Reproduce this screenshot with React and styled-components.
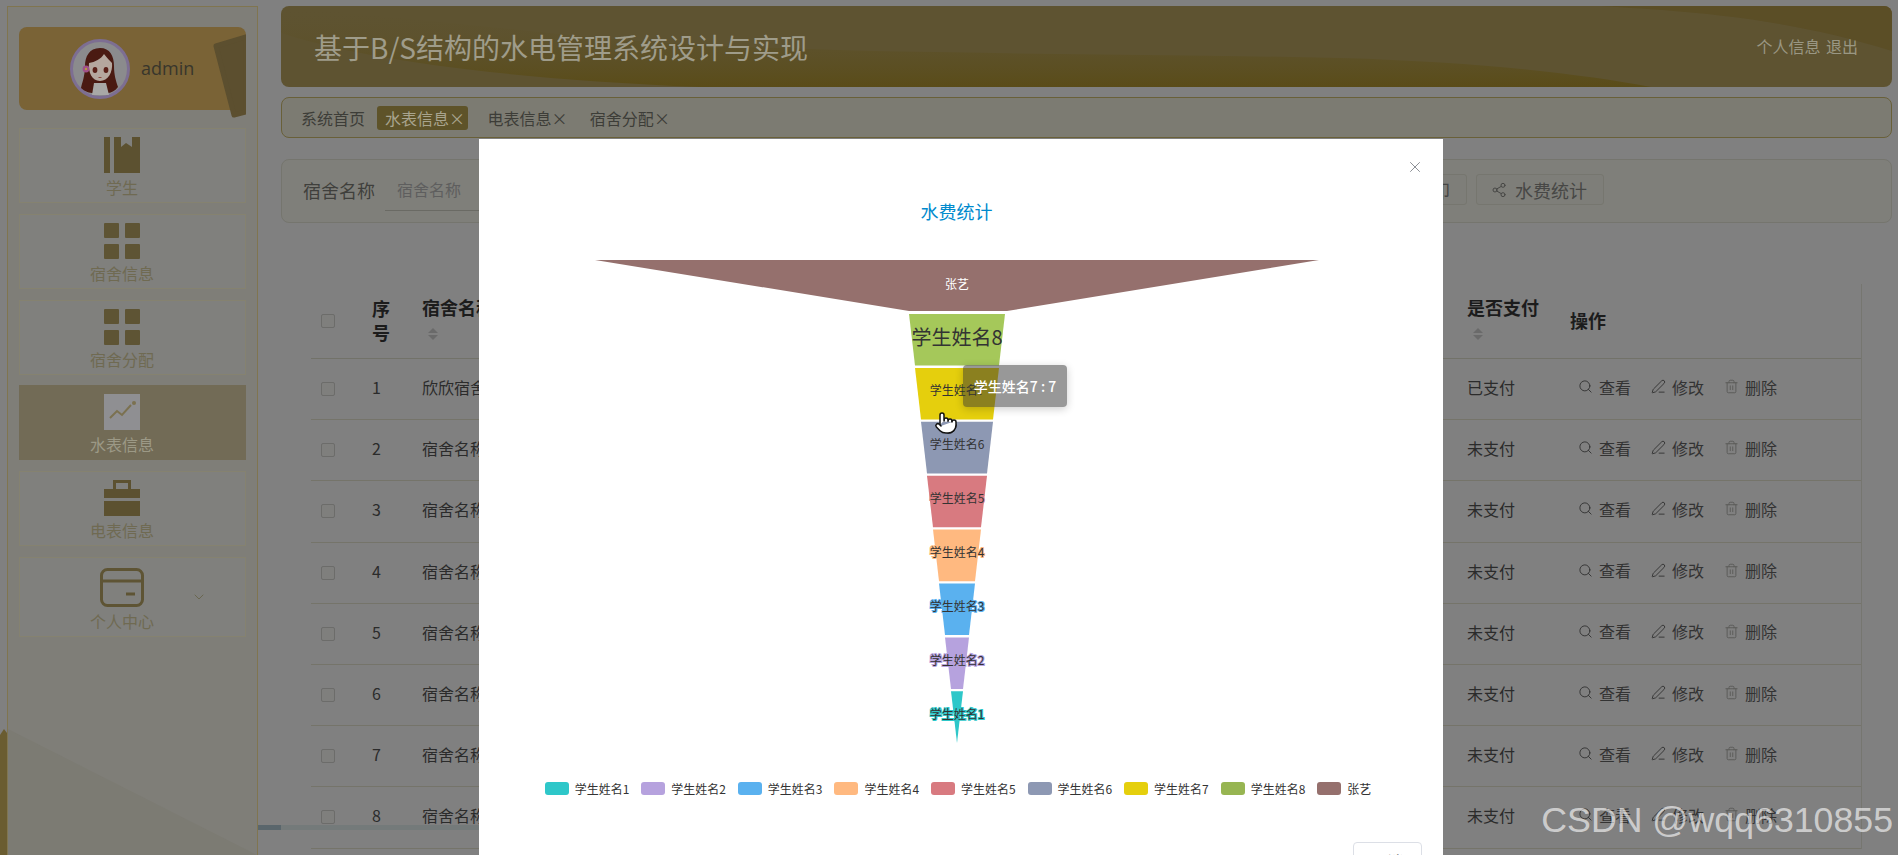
import React from 'react'
import styled, { createGlobalStyle } from 'styled-components'
import { Search, PenLine, Trash2, Share2, X, ChevronDown, Pointer } from 'lucide-react'

const GlobalStyle = createGlobalStyle`
  html, body {
    margin: 0;
    height: 855px;
    overflow: hidden;
    background: #808080;
    font-family: "Noto Sans CJK SC", "Liberation Sans", sans-serif;
  }
  * { box-sizing: border-box; }
`

const Page = styled.div`
  position: relative;
  display: flex;
  width: 1898px;
  height: 855px;
  overflow: hidden;
  padding-left: 7px;
`

const EdgeArt = styled.div`
  position: absolute;
  left: 0;
  top: 729px;
  width: 7px;
  height: 126px;
  background: #6a5c30;
  clip-path: polygon(0 6px, 4px 0, 7px 4px, 7px 100%, 0 100%);
`

const Sidebar = styled.aside`
  position: relative;
  flex: 0 0 251px;
  margin-top: 6px;
  padding: 20px 11px 0;
  background: #7f7e78;
  border: 1px solid #807550;
  border-bottom: 0;

  &::after {
    content: '';
    position: absolute;
    left: 0;
    right: 0;
    bottom: 0;
    height: 126px;
    background: #7c7b73;
    clip-path: polygon(0 0, 100% 100%, 0 100%);
  }
`

const ProfileCard = styled.div`
  position: relative;
  display: flex;
  align-items: center;
  gap: 11px;
  height: 83px;
  padding-left: 51px;
  margin-bottom: 18px;
  background: #7a6336;
  border-radius: 8px;
`

const ProfileFlap = styled.svg`
  position: absolute;
  right: 0;
  top: 5px;
  width: 36px;
  height: 86px;
`

const ProfileName = styled.span`
  font-family: "Open Sans", "Liberation Sans", sans-serif;
  font-size: 18px;
  color: #38362c;
  margin-bottom: 2px;
`

const Nav = styled.nav`
  position: relative;
  z-index: 1;
  display: flex;
  flex-direction: column;
  gap: 10.8px;
`

const NavItem = styled.div`
  position: relative;
  display: flex;
  flex-direction: column;
  align-items: center;
  height: ${p => (p.$tall ? 80 : 75)}px;
  padding: ${p => (p.$tall ? 10 : 8)}px 21px 0 0;
  background: ${p => (p.$active ? '#726b56' : '#80807d')};
  border: 1px solid ${p => (p.$active ? '#726b56' : '#858270')};
  font-size: 16px;
  line-height: 22px;
  color: ${p => (p.$active ? '#9c9986' : '#6f6a52')};
`

const NavIcon = styled.svg`
  display: block;
  width: ${p => p.$w || 36}px;
  height: ${p => p.$h || 36}px;
  margin-bottom: 3px;
`

const NavArrow = styled.span`
  position: absolute;
  left: 171px;
  top: 31px;
  display: flex;
  color: #6a6750;
`

const Main = styled.main`
  flex: 1;
  min-width: 0;
  padding: 6px 6px 0 23px;
`

const Header = styled.header`
  position: relative;
  display: flex;
  align-items: center;
  justify-content: space-between;
  height: 81px;
  padding: 0 34px 0 33px;
  margin-bottom: 10px;
  background: #5e5331;
  border-radius: 8px;
  overflow: hidden;
`

const HeaderWave = styled.svg`
  position: absolute;
  inset: 0;
  width: 100%;
  height: 100%;
`

const HeaderTitle = styled.h1`
  position: relative;
  margin: 0;
  font-size: 28px;
  font-weight: 400;
  color: #9f9c8a;
`

const HeaderLinks = styled.div`
  position: relative;
  margin-bottom: 2px;
  font-size: 16px;
  color: #9a9783;
  word-spacing: 2px;
`

const TabBar = styled.div`
  display: flex;
  align-items: center;
  gap: 11.4px;
  height: 41px;
  padding-left: 11px;
  margin-bottom: 21px;
  background: #7c7b72;
  border: 1.5px solid #696039;
  border-radius: 8px;

  & > :first-child {
    margin-right: -2.4px;
  }
`

const Tab = styled.span`
  display: flex;
  align-items: center;
  height: 24px;
  padding: 0 3px 0 8px;
  font-size: 16px;
  border-radius: 3px;
  background: ${p => (p.$active ? '#5e5329' : 'transparent')};
  color: ${p => (p.$active ? '#a8a48e' : '#3d3d38')};
`

const SearchBar = styled.div`
  display: flex;
  align-items: center;
  height: 64px;
  padding: 0 287px 3px 21px;
  margin-bottom: 61px;
  background: #7f7f7a;
  border: 1px solid #75756e;
  border-radius: 8px;
`

const FieldLabel = styled.span`
  font-size: 18px;
  color: #3f3f3c;
  margin-right: 10px;
`

const FieldInput = styled.div`
  width: 180px;
  height: 42px;
  padding: 8px 12px;
  font-size: 16px;
  line-height: 24px;
  color: #5e5e5e;
  border-bottom: 1px solid #6a6a64;
`

const ButtonRow = styled.div`
  display: flex;
  gap: 9px;
  margin-left: auto;
`

const ToolButton = styled.div`
  display: flex;
  align-items: center;
  gap: 8px;
  height: 31px;
  padding: 0 16px 0 14px;
  font-size: 18px;
  color: #474745;
  background: #7e7e79;
  border: 1px solid #76766f;
  border-radius: 3px;
`

const Table = styled.div`
  width: 1551px;
  margin-left: 30px;
  border-right: 1px solid #767670;
`

const Row = styled.div`
  display: grid;
  grid-template-columns: 61px 50px 1045px 103px 1fr;
  align-items: center;
  height: ${p => (p.$head ? 75 : 61.2)}px;
  border-bottom: 1px solid ${p => (p.$head ? '#727269' : '#75746a')};
  font-size: 16px;
  color: #2b2b2b;
`

const HeadCell = styled.div`
  padding-bottom: ${p => (p.$sortable ? 8 : 3)}px;
  font-size: 18px;
  font-weight: 700;
  line-height: 24px;
  color: #1c1c1c;
  white-space: nowrap;
`

const Cell = styled.div`
  padding-bottom: 4px;
  white-space: nowrap;
`

const CheckCell = styled.div`
  padding-left: 10px;
`

const CheckBox = styled.div`
  width: 14px;
  height: 14px;
  background: #7f7f7d;
  border: 1px solid #6c6c6a;
  border-radius: 2px;
`

const SortIcon = styled.div`
  display: flex;
  flex-direction: column;
  gap: 2px;
  width: 10px;
  margin: 9px 0 0 6px;

  &::before, &::after {
    content: '';
    border-left: 5px solid transparent;
    border-right: 5px solid transparent;
  }
  &::before { border-bottom: 5px solid #6a6a6a; }
  &::after { border-top: 5px solid #6a6a6a; }
`

const Actions = styled.div`
  display: flex;
  gap: 20px;
  padding: 0 0 5px 8px;
  color: #333;
`

const Action = styled.span`
  display: flex;
  align-items: center;
  gap: 6px;
`

const Watermark = styled.div`
  position: absolute;
  right: 5px;
  top: 796px;
  font-family: "Liberation Sans", sans-serif;
  font-size: 35.7px;
  line-height: 48px;
  color: rgba(255, 255, 255, 0.62);
  white-space: nowrap;
`

const VideoCaption = styled.div`
  position: absolute;
  left: 15px;
  top: 782px;
  font-size: 44px;
  line-height: 60px;
  color: rgba(0, 0, 0, 0.025);
  white-space: nowrap;
`

const ScrollTrack = styled.div`
  position: absolute;
  left: 258px;
  top: 825px;
  width: 222px;
  height: 5px;
  background: #747a7a;

  &::before {
    content: '';
    display: block;
    width: 23px;
    height: 100%;
    background: #5a666c;
  }
`

const Modal = styled.section`
  position: absolute;
  left: 479px;
  top: 139px;
  width: 964px;
  height: 760px;
  padding-top: 60px;
  background: #fff;
`

const ModalClose = styled.span`
  position: absolute;
  right: 19px;
  top: 19px;
  display: flex;
  color: #80838a;
`

const ChartTitle = styled.div`
  height: 24px;
  padding-right: 9px;
  font-size: 18px;
  line-height: 24px;
  text-align: center;
  color: #008acd;
`

const FunnelChart = styled.svg`
  display: block;
  width: 963px;
  height: 485px;
  margin: 37px 0 0 1px;
`

const Legend = styled.div`
  display: flex;
  justify-content: center;
  gap: 11.9px;
  height: 14px;
  padding-right: 6px;
  margin-top: 36px;
`

const LegendItem = styled.div`
  display: flex;
  align-items: center;
  gap: 6px;
  font-size: 12px;
  color: #333;
`

const LegendSwatch = styled.span`
  width: 24px;
  height: 13px;
  border-radius: 3px;
  background: ${p => p.$color};
`

const ModalFooter = styled.div`
  display: flex;
  justify-content: flex-end;
  padding-right: 21px;
  margin-top: 47px;
`

const CancelButton = styled.div`
  width: 69px;
  height: 40px;
  padding-top: 8px;
  text-align: center;
  font-size: 16px;
  line-height: 20px;
  color: #606266;
  border: 1px solid #dcdfe6;
  border-radius: 4px;
`

const Tooltip = styled.div`
  position: absolute;
  left: 484px;
  top: 226px;
  width: 104px;
  height: 42px;
  font-size: 14px;
  font-weight: 500;
  line-height: 42px;
  text-align: center;
  color: #fff;
  background: rgba(50, 50, 50, 0.5);
  border-radius: 4px;
  box-shadow: 0 2px 8px rgba(0, 0, 0, 0.2);
`

const HandCursor = styled.span`
  position: absolute;
  left: 455px;
  top: 272px;
  display: flex;
  color: #111;
`

const iconColor = '#5c5130'

const BookIcon = () => (
  <NavIcon viewBox="0 0 36 36" fill={iconColor}>
    <rect x="0" y="0" width="6" height="36" />
    <path d="M10 0h7v10l5-4 6 4V0h8v36H10z" />
  </NavIcon>
)

const GridIcon = () => (
  <NavIcon viewBox="0 0 36 36" fill="#5e5434">
    <rect x="0" y="0" width="15" height="15" rx="1" />
    <rect x="21" y="0" width="15" height="15" rx="1" />
    <rect x="0" y="21" width="15" height="15" rx="1" />
    <rect x="21" y="21" width="15" height="15" rx="1" />
  </NavIcon>
)

const TrendIcon = () => (
  <NavIcon viewBox="0 0 36 36">
    <rect width="36" height="36" fill="#8f8f92" />
    <path d="M6 24l7-7 5 4 9-10" fill="none" stroke="#7b7150" strokeWidth="2" />
    <circle cx="30" cy="9" r="2" fill="#7b7150" />
  </NavIcon>
)

const CaseIcon = () => (
  <NavIcon viewBox="0 0 36 36" fill={iconColor}>
    <path d="M9 0h18v9h-3V3H12v6H9z" />
    <rect x="0" y="9" width="36" height="9" />
    <rect x="0" y="21" width="36" height="15" />
  </NavIcon>
)

const WalletIcon = () => (
  <NavIcon $w={44} $h={39} viewBox="0 0 44 39" fill="none" stroke="#5e5434" strokeWidth="3">
    <rect x="1.5" y="1.5" width="41" height="36" rx="6" />
    <path d="M1.5 13h41" />
    <path d="M26 26h9" />
  </NavIcon>
)

const Avatar = () => (
  <svg width="60" height="60" viewBox="0 0 60 60">
    <circle cx="30" cy="30" r="28.5" fill="#8b8b8d" stroke="#7d6e92" strokeWidth="3" />
    <path d="M30 9c-11 0-15 9-15 18 0 10-3 17-4 22 4 4 9 5 12 5h14c4 0 8-2 11-6-2-6-4-12-4-21 0-10-4-18-14-18z" fill="#4a1a12" />
    <path d="M19 24c6-1 12-4 15-9 3 4 6 7 8 9 1 9-4 18-12 18s-12-9-11-18z" fill="#b5a79e" />
    <ellipse cx="25" cy="31" rx="2.4" ry="3" fill="#5a2018" />
    <ellipse cx="36" cy="31" rx="2.4" ry="3" fill="#5a2018" />
    <path d="M28.5 38.5h3" stroke="#8a4a40" strokeWidth="1" />
    <path d="M24 44h12l3 12H22z" fill="#a8a8a6" />
    <circle cx="16" cy="30" r="3.4" fill="#a0508a" />
    <circle cx="16" cy="30" r="1.2" fill="#b89a40" />
  </svg>
)

const navItems = [
  { label: '学生', icon: <BookIcon /> },
  { label: '宿舍信息', icon: <GridIcon /> },
  { label: '宿舍分配', icon: <GridIcon /> },
  { label: '水表信息', icon: <TrendIcon />, active: true },
  { label: '电表信息', icon: <CaseIcon /> },
  { label: '个人中心', icon: <WalletIcon />, tall: true, arrow: true },
]

const tabs = ['水表信息', '电表信息', '宿舍分配']

const rows = [
  { id: 1, name: '欣欣宿舍', paid: '已支付' },
  ...[2, 3, 4, 5, 6, 7, 8].map(id => ({ id, name: `宿舍名称${id}`, paid: '未支付' })),
]

const series = [
  { name: '学生姓名8', color: '#a5c85a', big: true },
  { name: '学生姓名7', color: '#e5cf0d' },
  { name: '学生姓名6', color: '#8d98b3' },
  { name: '学生姓名5', color: '#d87a80' },
  { name: '学生姓名4', color: '#ffb980' },
  { name: '学生姓名3', color: '#5ab1ef' },
  { name: '学生姓名2', color: '#b6a2de' },
  { name: '学生姓名1', color: '#2ec7c9' },
]

const legend = [
  ['学生姓名1', '#2ec7c9'],
  ['学生姓名2', '#b6a2de'],
  ['学生姓名3', '#5ab1ef'],
  ['学生姓名4', '#ffb980'],
  ['学生姓名5', '#d87a80'],
  ['学生姓名6', '#8d98b3'],
  ['学生姓名7', '#e5cf0d'],
  ['学生姓名8', '#97b552'],
  ['张艺', '#95706d'],
]

const Funnel = () => (
  <FunnelChart viewBox="0 0 963 485">
    <polygon points="115,0 839,0 527,51 429,51" fill="#95706d" />
    <text x="477" y="23" fontSize="12" fill="#fff" textAnchor="middle" dominantBaseline="central">张艺</text>
    {series.map((s, i) => {
      const top = 54 + i * 53.9
      const bottom = top + 51.6
      const a = 48 - i * 6
      const b = a - 6
      return (
        <g key={s.name}>
          <polygon
            points={`${477 - a},${top} ${477 + a},${top} ${477 + b},${bottom} ${477 - b},${bottom}`}
            fill={s.color}
          />
          <text
            x="477"
            y={top + 22}
            fontSize={s.big ? 20 : 12}
            fill="#333"
            stroke={s.color}
            strokeWidth={s.big ? 0 : 2}
            paintOrder="stroke"
            textAnchor="middle"
            dominantBaseline="central"
          >
            {s.name}
          </text>
        </g>
      )
    })}
  </FunnelChart>
)

export default function App() {
  return (
    <Page>
      <GlobalStyle />
      <EdgeArt />
      <Sidebar>
        <ProfileCard>
          <Avatar />
          <ProfileName>admin</ProfileName>
          <ProfileFlap viewBox="0 0 36 86">
            <path d="M6 14L36 5V80L24 83Z" fill="#5c4f2f" stroke="#5c4f2f" strokeWidth="5" strokeLinejoin="round" />
          </ProfileFlap>
        </ProfileCard>
        <Nav>
          {navItems.map(item => (
            <NavItem key={item.label} $active={item.active} $tall={item.tall}>
              {item.icon}
              {item.label}
              {item.arrow && (
                <NavArrow>
                  <ChevronDown size={16} strokeWidth={1.5} />
                </NavArrow>
              )}
            </NavItem>
          ))}
        </Nav>
      </Sidebar>

      <Main>
        <Header>
          <HeaderWave viewBox="0 0 1611 81" preserveAspectRatio="none">
            <defs>
              <linearGradient id="waveShade" x1="0" y1="0" x2="0" y2="1">
                <stop offset="0" stopColor="#5e5331" stopOpacity="0" />
                <stop offset="1" stopColor="#5a4c18" />
              </linearGradient>
            </defs>
            <path d="M0 0V27C70 50 200 72 420 81H1370C1300 68 1200 56 1060 52C800 46 500 50 300 30C200 20 100 10 0 0Z" fill="url(#waveShade)" />
            <path d="M1320 0C1400 5 1500 10 1611 45V0Z" fill="#5b4e26" />
          </HeaderWave>
          <HeaderTitle>基于B/S结构的水电管理系统设计与实现</HeaderTitle>
          <HeaderLinks>个人信息 退出</HeaderLinks>
        </Header>

        <TabBar>
          <Tab>系统首页</Tab>
          {tabs.map((t, i) => (
            <Tab key={t} $active={i === 0}>{t}×</Tab>
          ))}
        </TabBar>

        <SearchBar>
          <FieldLabel>宿舍名称</FieldLabel>
          <FieldInput>宿舍名称</FieldInput>
          <ButtonRow>
            <ToolButton>打印</ToolButton>
            <ToolButton><Share2 size={16} strokeWidth={1.5} />水费统计</ToolButton>
          </ButtonRow>
        </SearchBar>

        <Table>
          <Row $head>
            <CheckCell><CheckBox /></CheckCell>
            <HeadCell>序<br />号</HeadCell>
            <HeadCell $sortable>宿舍名称<SortIcon /></HeadCell>
            <HeadCell $sortable>是否支付<SortIcon /></HeadCell>
            <HeadCell>操作</HeadCell>
          </Row>
          {rows.map(r => (
            <Row key={r.id}>
              <CheckCell><CheckBox /></CheckCell>
              <Cell>{r.id}</Cell>
              <Cell>{r.name}</Cell>
              <Cell>{r.paid}</Cell>
              <Actions>
                <Action><Search size={15} strokeWidth={1.5} />查看</Action>
                <Action><PenLine size={15} strokeWidth={1.5} />修改</Action>
                <Action><Trash2 size={15} strokeWidth={1.5} color="#5a5a58" />删除</Action>
              </Actions>
            </Row>
          ))}
        </Table>
      </Main>

      <VideoCaption>ssm基于BS结构的水电管理系统</VideoCaption>
      <ScrollTrack />

      <Modal>
        <ModalClose><X size={18} strokeWidth={1.2} /></ModalClose>
        <ChartTitle>水费统计</ChartTitle>
        <Funnel />
        <Legend>
          {legend.map(([name, color]) => (
            <LegendItem key={name}>
              <LegendSwatch $color={color} />
              {name}
            </LegendItem>
          ))}
        </Legend>
        <ModalFooter>
          <CancelButton>取消</CancelButton>
        </ModalFooter>
        <Tooltip>学生姓名7 : 7</Tooltip>
        <HandCursor><Pointer size={24} strokeWidth={1.5} fill="#fff" /></HandCursor>
      </Modal>

      <Watermark>CSDN @wqq6310855</Watermark>
    </Page>
  )
}
